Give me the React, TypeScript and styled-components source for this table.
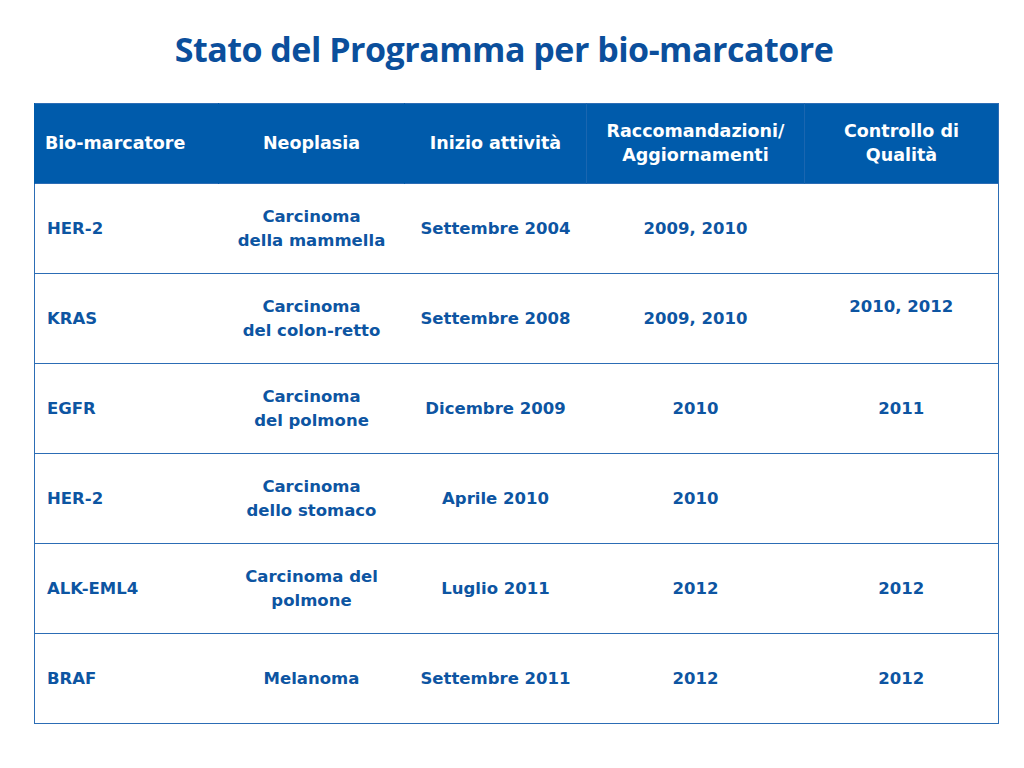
import { createGlobalStyle, styled } from "styled-components";

const GlobalStyle = createGlobalStyle`
  html, body {
    margin: 0;
    padding: 0;
    background: #fff;
  }
`;

const Page = styled.div`
  width: 1024px;
  height: 768px;
  padding: 26px 26px 0 34px;
  box-sizing: border-box;
`;

const Title = styled.h1`
  margin: 0 0 31px;
  padding-right: 24px;
  text-align: center;
  font-family: "Open Sans", sans-serif;
  font-weight: 700;
  font-size: 34px;
  line-height: 46px;
  color: #0b4f9c;
  letter-spacing: -0.5px;
`;

const Table = styled.table`
  width: 964px;
  border-collapse: collapse;
  table-layout: fixed;
  border: 1.5px solid #2c6db5;
  font-family: "DejaVu Sans", sans-serif;
  font-weight: 700;
  font-size: 16.5px;
  line-height: 24px;
`;

const Head = styled.th<{ $left?: boolean; $divider?: boolean }>`
  box-sizing: border-box;
  height: 80px;
  padding: 0 10px 2px;
  background: #005bab;
  color: #fff;
  font-size: 17.5px;
  font-weight: 700;
  text-align: ${(p) => (p.$left ? "left" : "center")};
  vertical-align: middle;
  border-left: 1px solid ${(p) => (p.$divider ? "#1a66b0" : "#005bab")};
`;

const Row = styled.tr`
  border-top: 1.5px solid #2c6db5;
`;

const Cell = styled.td<{ $left?: boolean; $raised?: boolean }>`
  box-sizing: border-box;
  height: 90px;
  padding: 0 12px ${(p) => (p.$raised ? "24px" : "0")};
  color: #0d55a2;
  text-align: ${(p) => (p.$left ? "left" : "center")};
  vertical-align: middle;
`;

type Item = {
  marker: string;
  tumour: string[];
  start: string;
  recs: string;
  qc: string;
  qcRaised?: boolean;
};

const rows: Item[] = [
  { marker: "HER-2", tumour: ["Carcinoma", "della mammella"], start: "Settembre 2004", recs: "2009, 2010", qc: "" },
  { marker: "KRAS", tumour: ["Carcinoma", "del colon-retto"], start: "Settembre 2008", recs: "2009, 2010", qc: "2010, 2012", qcRaised: true },
  { marker: "EGFR", tumour: ["Carcinoma", "del polmone"], start: "Dicembre 2009", recs: "2010", qc: "2011" },
  { marker: "HER-2", tumour: ["Carcinoma", "dello stomaco"], start: "Aprile 2010", recs: "2010", qc: "" },
  { marker: "ALK-EML4", tumour: ["Carcinoma del", "polmone"], start: "Luglio 2011", recs: "2012", qc: "2012" },
  { marker: "BRAF", tumour: ["Melanoma"], start: "Settembre 2011", recs: "2012", qc: "2012" },
];

export default function App() {
  return (
    <>
      <GlobalStyle />
      <Page>
        <Title>Stato del Programma per bio-marcatore</Title>
        <Table>
          <colgroup>
            <col style={{ width: 184 }} />
            <col style={{ width: 186 }} />
            <col style={{ width: 182 }} />
            <col style={{ width: 218 }} />
            <col style={{ width: 194 }} />
          </colgroup>
          <thead>
            <tr>
              <Head $left>Bio-marcatore</Head>
              <Head>Neoplasia</Head>
              <Head>Inizio attività</Head>
              <Head $divider>
                Raccomandazioni/
                <br />
                Aggiornamenti
              </Head>
              <Head $divider>
                Controllo di
                <br />
                Qualità
              </Head>
            </tr>
          </thead>
          <tbody>
            {rows.map((r, i) => (
              <Row key={i}>
                <Cell $left>{r.marker}</Cell>
                <Cell>
                  {r.tumour.map((t, j) => (
                    <div key={j}>{t}</div>
                  ))}
                </Cell>
                <Cell>{r.start}</Cell>
                <Cell>{r.recs}</Cell>
                <Cell $raised={r.qcRaised}>{r.qc}</Cell>
              </Row>
            ))}
          </tbody>
        </Table>
      </Page>
    </>
  );
}
